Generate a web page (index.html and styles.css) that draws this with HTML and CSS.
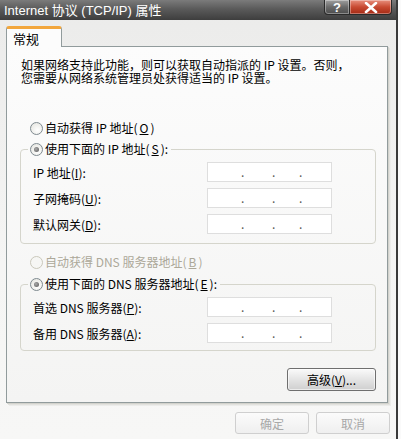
FILE: index.html
```html
<!DOCTYPE html>
<html lang="zh-CN">
<head>
  <meta charset="UTF-8">
  <title>Internet 协议 (TCP/IP) 属性</title>
  <link rel="stylesheet" href="styles.css">
</head>
<body>
  <!-- Ventana del diálogo -->
  <div class="window">
    <div class="titlebar">
      <span class="title">Internet 协议 (TCP/IP) 属性</span>
      <div class="caption-buttons">
        <span class="cap-btn help">?</span>
        <span class="cap-btn close">
          <svg width="14" height="11" viewBox="0 0 14 11"><path d="M2 1 L12 10 M12 1 L2 10" stroke="#fff" stroke-width="2.6" stroke-linecap="round"/></svg>
        </span>
      </div>
    </div>

    <div class="body">
      <div class="tabs">
        <div class="tab">常规</div>
      </div>

      <div class="panel">
        <p class="intro">如果网络支持此功能，则可以获取自动指派的 IP 设置。否则，</p>
        <p class="intro">您需要从网络系统管理员处获得适当的 IP 设置。</p>

        <div class="radio first"><span class="circle"></span>自动获得 IP 地址(<u>O</u>)</div>

        <fieldset class="group ip-group">
          <legend class="radio"><span class="circle checked"></span>使用下面的 IP 地址(<u>S</u>):</legend>
          <div class="row">
            <span class="label">IP 地址(<u>I</u>):</span>
            <div class="ipbox"><i>.</i><i>.</i><i>.</i></div>
          </div>
          <div class="row">
            <span class="label">子网掩码(<u>U</u>):</span>
            <div class="ipbox"><i>.</i><i>.</i><i>.</i></div>
          </div>
          <div class="row">
            <span class="label">默认网关(<u>D</u>):</span>
            <div class="ipbox"><i>.</i><i>.</i><i>.</i></div>
          </div>
        </fieldset>

        <div class="radio disabled dns-auto"><span class="circle"></span>自动获得 DNS 服务器地址(<u>B</u>)</div>

        <fieldset class="group dns-group">
          <legend class="radio"><span class="circle checked"></span>使用下面的 DNS 服务器地址(<u>E</u>):</legend>
          <div class="row">
            <span class="label">首选 DNS 服务器(<u>P</u>):</span>
            <div class="ipbox"><i>.</i><i>.</i><i>.</i></div>
          </div>
          <div class="row">
            <span class="label">备用 DNS 服务器(<u>A</u>):</span>
            <div class="ipbox"><i>.</i><i>.</i><i>.</i></div>
          </div>
        </fieldset>

        <div class="actions">
          <button class="btn advanced">高级(<u>V</u>)...</button>
        </div>
      </div>

      <!-- Botones inferiores -->
      <div class="footer">
        <button class="btn muted">确定</button>
        <button class="btn muted">取消</button>
      </div>
    </div>
  </div>
</body>
</html>
```

FILE: styles.css
```css
/* General */
body {
  margin: 0;
  padding: 0;
  background: #fafafa;
  font-family: "Noto Sans CJK SC", "Liberation Sans", sans-serif;
  font-size: 12px;
  color: #000;
  overflow: hidden;
}

.window {
  width: 396px;
  height: 439px;
  background: linear-gradient(#ebebea, #f5f5f4 60%, #f7f7f6);
  border-right: 2px solid #3a3a3a;
}

/* Barra de título */
.titlebar {
  height: 20px;
  display: flex;
  align-items: flex-start;
  background: linear-gradient(#7b7b7b, #5a5a5a 45%, #3e3e3e);
}

.title {
  padding-left: 4px;
  line-height: 21px;
  font-size: 13px;
  color: #fff;
  font-family: "Liberation Sans", "Noto Sans CJK SC", sans-serif;
}

.caption-buttons {
  margin-left: auto;
  margin-right: 4px;
  display: flex;
}

.cap-btn {
  height: 14px;
  display: flex;
  align-items: center;
  justify-content: center;
  border: 1px solid #2a2a2a;
  border-top: none;
  box-shadow: inset 0 0 0 1px rgba(255, 255, 255, 0.35);
}

.help {
  width: 24px;
  border-radius: 0 0 0 4px;
  background: linear-gradient(#a0a0a0, #6a6a6a 50%, #4c4c4c);
  color: #fff;
  font-weight: bold;
  font-size: 13px;
  font-family: "Liberation Sans", sans-serif;
}

.close {
  width: 41px;
  border-left: none;
  border-radius: 0 0 4px 0;
  background: linear-gradient(#e8907e, #c84a32 50%, #a52a14);
}

/* Cuerpo */
.body {
  padding: 6px 6px 0 6px;
}

.tabs {
  display: flex;
}

.tab {
  position: relative;
  z-index: 1;
  width: 48px;
  height: 18px;
  margin-bottom: -1px;
  padding-left: 6px;
  box-sizing: content-box;
  line-height: 19px;
  font-size: 13px;
  background: #fcfcfc;
  border: 1px solid #919b9c;
  border-top: 3px solid #f2a63c;
  border-bottom: none;
  border-radius: 3px 3px 0 0;
}

.panel {
  width: 382px;
  height: 357px;
  box-sizing: border-box;
  padding: 11px 11px 0 13px;
  background: linear-gradient(#fcfcfc, #f4f4f3);
  border: 1px solid #919b9c;
  box-shadow: 1px 1px 0 #d2d2cc, 2px 2px 0 #e2e2de, 3px 3px 0 #ececea;
}

.intro {
  margin: 0;
  height: 13px;
  line-height: 13px;
  padding-left: 1px;
  white-space: nowrap;
}

/* Radios */
.radio {
  display: flex;
  align-items: center;
  gap: 2px;
  height: 16px;
  line-height: 16px;
  white-space: nowrap;
}

.radio.first {
  margin-top: 36px;
  margin-left: 10px;
}

.radio.dns-auto {
  margin-top: 10px;
  margin-left: 10px;
}

.radio.disabled {
  color: #aca899;
}

.circle {
  width: 11px;
  height: 11px;
  border: 1px solid #7f8a90;
  border-radius: 50%;
  background: radial-gradient(circle at 60% 65%, #ffffff, #e2e2dc);
  display: flex;
  align-items: center;
  justify-content: center;
}

.disabled .circle {
  border-color: #cac8bb;
  background: #f6f6f4;
}

.circle.checked::after {
  content: "";
  width: 5px;
  height: 5px;
  border-radius: 50%;
  background: radial-gradient(circle at 40% 40%, #aaa, #555);
}

/* Grupos */
.group {
  margin: 5px 0 0 0;
  padding: 5px 43px 9px 12px;
  border: 1px solid #d5d5cc;
  border-radius: 4px;
  display: flex;
  flex-direction: column;
  gap: 6px;
}

.dns-group {
  margin-top: 6px;
  padding-bottom: 7px;
}

.group legend {
  margin-left: -5px;
  padding: 0 3px 0 2px;
}

.row {
  display: flex;
  align-items: center;
  height: 20px;
}

.label {
  width: 174px;
  white-space: nowrap;
}

.ipbox {
  width: 125px;
  height: 20px;
  box-sizing: border-box;
  border: 1px solid #dedede;
  background: #fff;
  display: flex;
  align-items: center;
  padding-left: 33px;
}

.ipbox i {
  font-style: normal;
  width: 3px;
  color: #555;
  line-height: 12px;
}

.ipbox i:nth-child(2) {
  margin-left: 28px;
}

.ipbox i:nth-child(3) {
  margin-left: 24px;
}

/* Botones */
.actions {
  display: flex;
  justify-content: flex-end;
  margin-top: 17px;
}

.btn {
  font-family: "Noto Sans CJK SC", "Liberation Sans", sans-serif;
  font-size: 12px;
  padding: 0;
  border-radius: 3px;
  cursor: pointer;
}

.advanced {
  width: 89px;
  height: 23px;
  color: #000;
  border: 1px solid #6f6f6f;
  background: linear-gradient(#fafafa, #e4e4e4 50%, #cfcfcf);
  box-shadow: inset 0 0 0 1px rgba(255, 255, 255, 0.6);
}

.footer {
  display: flex;
  justify-content: flex-end;
  gap: 7px;
  margin-top: 9px;
}

.muted {
  width: 74px;
  height: 22px;
  color: #a8a8a8;
  border: 1px solid #cfcfcf;
  background: linear-gradient(#fbfbfb, #efefef);
}
```
